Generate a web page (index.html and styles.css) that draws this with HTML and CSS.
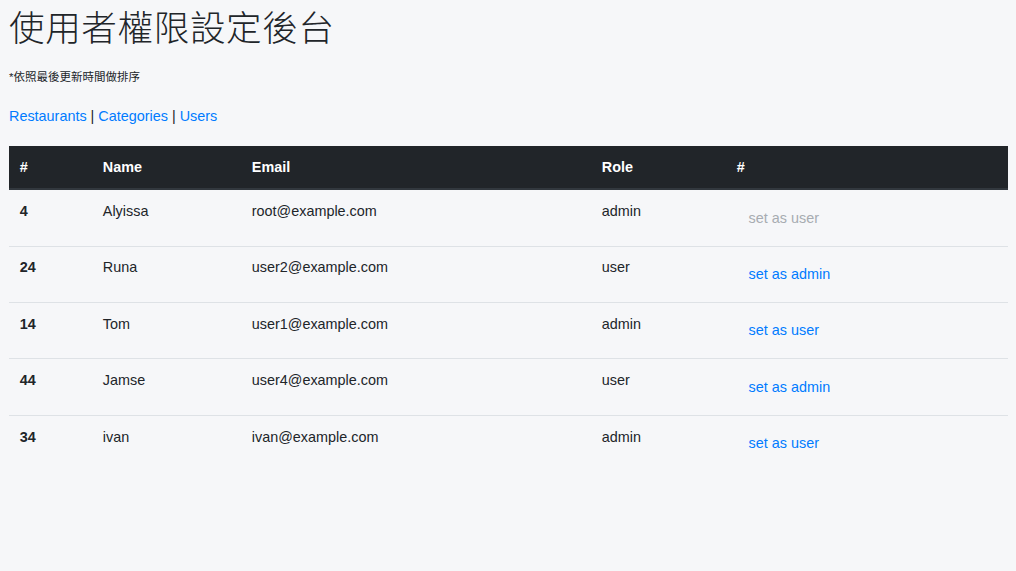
FILE: index.html
```html
<!DOCTYPE html>
<html lang="zh-Hant">
<head>
<meta charset="utf-8">
<title>使用者權限設定後台</title>
<link rel="stylesheet" href="styles.css">
</head>
<body>
<main class="page">
  <h1 class="title">使用者權限設定後台</h1>
  <p class="note">*依照最後更新時間做排序</p>
  <nav class="nav">
    <a href="#">Restaurants</a> | <a href="#">Categories</a> | <a href="#">Users</a>
  </nav>
  <table class="users">
    <colgroup>
      <col class="c-id"><col class="c-name"><col class="c-email"><col class="c-role"><col class="c-act">
    </colgroup>
    <thead>
      <tr><th>#</th><th>Name</th><th>Email</th><th>Role</th><th>#</th></tr>
    </thead>
    <tbody>
      <tr><th>4</th><td>Alyissa</td><td>root@example.com</td><td>admin</td><td><button class="btn-link disabled">set as user</button></td></tr>
      <tr><th>24</th><td>Runa</td><td>user2@example.com</td><td>user</td><td><button class="btn-link">set as admin</button></td></tr>
      <tr><th>14</th><td>Tom</td><td>user1@example.com</td><td>admin</td><td><button class="btn-link">set as user</button></td></tr>
      <tr><th>44</th><td>Jamse</td><td>user4@example.com</td><td>user</td><td><button class="btn-link">set as admin</button></td></tr>
      <tr><th>34</th><td>ivan</td><td>ivan@example.com</td><td>admin</td><td><button class="btn-link">set as user</button></td></tr>
    </tbody>
  </table>
</main>
</body>
</html>
```
FILE: styles.css
```css
html, body {
  margin: 0;
  padding: 0;
  background: #f6f7f9;
}
body {
  font-family: "Liberation Sans", Arial, "Noto Sans CJK TC", sans-serif;
  font-size: 14.4px;
  line-height: 1.5;
  color: #212529;
}
.page {
  padding: 5px 8px 0 9px;
}
.title {
  margin: 0 0 21px;
  font-family: "Noto Sans CJK TC", sans-serif;
  font-weight: 300;
  font-size: 35.6px;
  line-height: 1.2;
  letter-spacing: 0.6px;
  color: #212529;
}
.note {
  margin: 0 0 20px;
  font-family: "Liberation Sans", "Noto Sans CJK TC", sans-serif;
  font-size: 11.5px;
  color: #212529;
}
.nav {
  margin: 0 0 18px;
  font-size: 14.4px;
}
.nav a {
  color: #007bff;
  text-decoration: none;
}
.users {
  width: 999px;
  border-collapse: collapse;
}
.c-id { width: 83px; }
.c-name { width: 149px; }
.c-email { width: 350px; }
.c-role { width: 135px; }
.c-act { width: 282px; }
.users th, .users td {
  padding: 10.8px;
  text-align: left;
  vertical-align: top;
}
.users thead th {
  background: #212529;
  color: #fff;
  font-weight: bold;
  border-bottom: 2px solid #32383e;
  padding-top: 11.5px;
  padding-bottom: 9.5px;
}
.users tbody th, .users tbody td {
  border-top: 1px solid #dee2e6;
}
.users tbody tr:first-child th, .users tbody tr:first-child td {
  border-top: 0;
}
.users tbody th {
  font-weight: bold;
}
.btn-link {
  display: inline-block;
  margin: 0;
  padding: 5.6px 10.8px 4.6px;
  border: 1px solid transparent;
  background: transparent;
  font-family: inherit;
  font-size: 14.4px;
  line-height: 1.5;
  color: #007bff;
  cursor: pointer;
}
.btn-link.disabled {
  color: #a7acb1;
}
```
